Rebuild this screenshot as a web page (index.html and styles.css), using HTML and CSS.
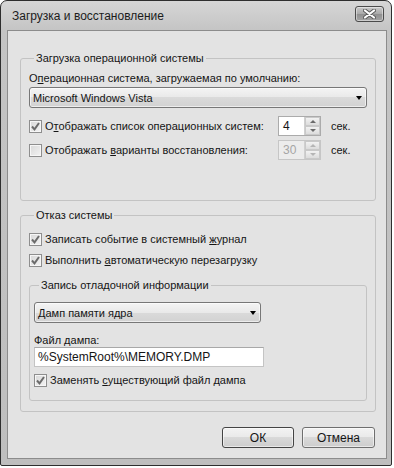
FILE: index.html
```html
<!DOCTYPE html>
<html>
<head>
  <meta charset="utf-8">
  <title>Загрузка и восстановление</title>
  <link rel="stylesheet" href="styles.css">
</head>
<body>
  <div class="window">
    <div class="titlebar">
      <span class="title">Загрузка и восстановление</span>
      <span class="close-btn">
        <svg width="13" height="10" viewBox="0 0 13 10">
          <path d="M2 1.5 L11 8.5 M11 1.5 L2 8.5" stroke="#5a5a5a" stroke-width="4" stroke-linecap="round"/>
          <path d="M2 1.5 L11 8.5 M11 1.5 L2 8.5" stroke="#fff" stroke-width="2.2" stroke-linecap="round"/>
        </svg>
      </span>
    </div>

    <div class="client">
      <!-- boot -->
      <fieldset class="group group-boot">
        <legend>Загрузка операционной системы</legend>
        <div class="field-label">О<u>п</u>ерационная система, загружаемая по умолчанию:</div>
        <div class="select select-wide">
          <span>Microsoft Windows Vista</span>
          <span class="arrow"></span>
        </div>

        <div class="spin-row first">
          <div class="check check-fixed">
            <span class="box"><svg width="11" height="11" viewBox="0 0 11 11"><path d="M2 5.5 L4.5 8.3 L9 2" fill="none" stroke="#6b6b6b" stroke-width="2"/></svg></span>
            <span>О<u>т</u>ображать список операционных систем:</span>
          </div>
          <div class="spin">
            <span class="spin-value">4</span>
            <span class="spin-btns"><span class="up"></span><span class="down"></span></span>
          </div>
          <span class="unit">сек.</span>
        </div>

        <div class="spin-row">
          <div class="check check-fixed">
            <span class="box"></span>
            <span>Отображать <u>в</u>арианты восстановления:</span>
          </div>
          <div class="spin disabled">
            <span class="spin-value">30</span>
            <span class="spin-btns"><span class="up"></span><span class="down"></span></span>
          </div>
          <span class="unit">сек.</span>
        </div>
      </fieldset>

      <!-- failure -->
      <fieldset class="group group-failure">
        <legend>Отказ системы</legend>
        <div class="check">
          <span class="box"><svg width="11" height="11" viewBox="0 0 11 11"><path d="M2 5.5 L4.5 8.3 L9 2" fill="none" stroke="#6b6b6b" stroke-width="2"/></svg></span>
          <span>Записать событие в системный <u>ж</u>урнал</span>
        </div>
        <div class="check second">
          <span class="box"><svg width="11" height="11" viewBox="0 0 11 11"><path d="M2 5.5 L4.5 8.3 L9 2" fill="none" stroke="#6b6b6b" stroke-width="2"/></svg></span>
          <span>Выполнить <u>а</u>втоматическую перезагрузку</span>
        </div>

        <fieldset class="group group-debug">
          <legend>Запись отладочной информации</legend>
          <div class="select select-narrow">
            <span>Дамп памяти ядра</span>
            <span class="arrow"></span>
          </div>
          <div class="field-label dump-label">Файл дампа:</div>
          <div class="textbox">%SystemRoot%\MEMORY.DMP</div>
          <div class="check third">
            <span class="box"><svg width="11" height="11" viewBox="0 0 11 11"><path d="M2 5.5 L4.5 8.3 L9 2" fill="none" stroke="#6b6b6b" stroke-width="2"/></svg></span>
            <span>Заменять <u>с</u>уществующий файл дампа</span>
          </div>
        </fieldset>
      </fieldset>

      <div class="buttons">
        <span class="btn btn-default">ОК</span>
        <span class="btn btn-cancel">Отмена</span>
      </div>
    </div>
  </div>
</body>
</html>
```

FILE: styles.css
```css
body{
  margin: 0;
  background: #fff;
  font-family: "Liberation Sans", Arial, sans-serif;
  font-size: 11px;
  color: #151515;
}
u{
  text-decoration: underline;
  text-underline-offset: 1px;
}

/* window frame */
.window{
  width: 392px;
  box-sizing: border-box;
  border: 1px solid #2e2e2e;
  border-radius: 7px 7px 2px 2px;
  background: linear-gradient(#d6d6d6, #c4c4c4 30px, #bebebe);
  padding: 0 4px 6px 6px;
}
.titlebar{
  height: 29px;
  display: flex;
  align-items: center;
  padding-left: 5px;
}
.title{
  font-size: 12px;
  color: #1c1c1c;
  flex: 1;
}
.close-btn{
  width: 27px;
  height: 14px;
  margin-right: 3px;
  margin-top: -4px;
  border: 1px solid #4a4a4a;
  border-radius: 3px;
  background: linear-gradient(#c9c9c9, #a9a9a9 50%, #8f8f8f 50%, #a5a5a5);
  box-shadow: inset 0 0 0 1px rgba(255,255,255,.45);
  display: flex;
  align-items: center;
  justify-content: center;
}
.client{
  background: #e3e3e3;
  border: 1px solid #8c8c8c;
  padding: 0 0 10px 0;
}

/* group boxes */
.group{
  border: 1px solid #c3c3c3;
  border-radius: 3px;
  margin: 0;
  min-width: 0;
}
.group legend{
  line-height: 14px;
  padding: 0 2px;
  margin-left: 5px;
}
.group-boot{
  margin: 20px 10px 0 12px;
  padding: 6px 8px 40px 8px;
}
.group-failure{
  margin: 7px 10px 0 12px;
  padding: 9px 8px 10px 8px;
}
.group-debug{
  margin-top: 10px;
  padding: 10px 4px 12px 4px;
}

.field-label{
  line-height: 14px;
  margin-bottom: 2px;
}
.dump-label{
  line-height: 13px;
  margin: 11px 0 0 0;
}

/* combo boxes */
.select{
  height: 21px;
  box-sizing: border-box;
  border: 1px solid #777;
  border-radius: 3px;
  background: linear-gradient(#f4f4f4, #e9e9e9 50%, #dadada 50%, #d2d2d2);
  box-shadow: inset 0 0 0 1px rgba(255,255,255,.6);
  display: flex;
  align-items: center;
  justify-content: space-between;
  padding: 0 4px 0 3px;
}
.select-narrow{
  width: 227px;
}
.arrow{
  width: 0;
  height: 0;
  border-left: 3.5px solid transparent;
  border-right: 3.5px solid transparent;
  border-top: 4px solid #000;
  margin-top: 1px;
}

/* checkboxes */
.check{
  display: flex;
  align-items: center;
  height: 16px;
}
.check.second{
  margin-top: 5px;
}
.check.third{
  margin-top: 5px;
}
.check-fixed{
  width: 249px;
}
.box{
  width: 13px;
  height: 13px;
  box-sizing: border-box;
  border: 1px solid #8e8e8e;
  background: linear-gradient(135deg, #d8d8d8, #f3f3f3);
  box-shadow: inset 0 0 0 1px #f6f6f6;
  margin-right: 3px;
  display: flex;
  align-items: center;
  justify-content: center;
  flex: none;
}

/* spinners */
.spin-row{
  display: flex;
  align-items: center;
  height: 20px;
  margin-top: 4px;
}
.spin-row.first{
  margin-top: 8px;
}
.spin{
  width: 43px;
  height: 20px;
  box-sizing: border-box;
  border: 1px solid #ababab;
  background: #fff;
  display: flex;
}
.spin-value{
  flex: 1;
  line-height: 18px;
  padding-left: 4px;
  font-size: 12px;
}
.spin-btns{
  width: 15px;
  display: flex;
  flex-direction: column;
  border-left: 1px solid #d0d0d0;
}
.spin-btns span{
  flex: 1;
  background: linear-gradient(#f2f2f2, #dcdcdc);
  border: 1px solid #c9c9c9;
  display: flex;
  align-items: center;
  justify-content: center;
}
.spin-btns .up::after{
  content: "";
  border-left: 3px solid transparent;
  border-right: 3px solid transparent;
  border-bottom: 3px solid #6a6a6a;
}
.spin-btns .down::after{
  content: "";
  border-left: 3px solid transparent;
  border-right: 3px solid transparent;
  border-top: 3px solid #6a6a6a;
}
.spin.disabled{
  background: #ececec;
  border-color: #c6c6c6;
}
.spin.disabled .spin-value{
  color: #a5a5a5;
}
.spin.disabled .spin-btns .up::after{
  border-bottom-color: #b5b5b5;
}
.spin.disabled .spin-btns .down::after{
  border-top-color: #b5b5b5;
}
.unit{
  margin-left: 10px;
}

/* text input */
.textbox{
  width: 230px;
  height: 20px;
  box-sizing: border-box;
  border: 1px solid #c4c4c4;
  border-top-color: #a8a8a8;
  background: #fff;
  line-height: 18px;
  padding-left: 3px;
  font-size: 12px;
}

/* dialog buttons */
.buttons{
  display: flex;
  justify-content: flex-end;
  gap: 8px;
  margin: 15px 11px 0 0;
}
.btn{
  height: 21px;
  box-sizing: border-box;
  border: 1px solid #6f6f6f;
  border-radius: 3px;
  background: linear-gradient(#f3f3f3, #e9e9e9 50%, #d9d9d9 50%, #cdcdcd);
  box-shadow: inset 0 0 0 1px rgba(255,255,255,.55);
  display: flex;
  align-items: center;
  justify-content: center;
  font-size: 12px;
}
.btn-default{
  width: 72px;
  border-color: #444;
}
.btn-cancel{
  width: 73px;
}
```
